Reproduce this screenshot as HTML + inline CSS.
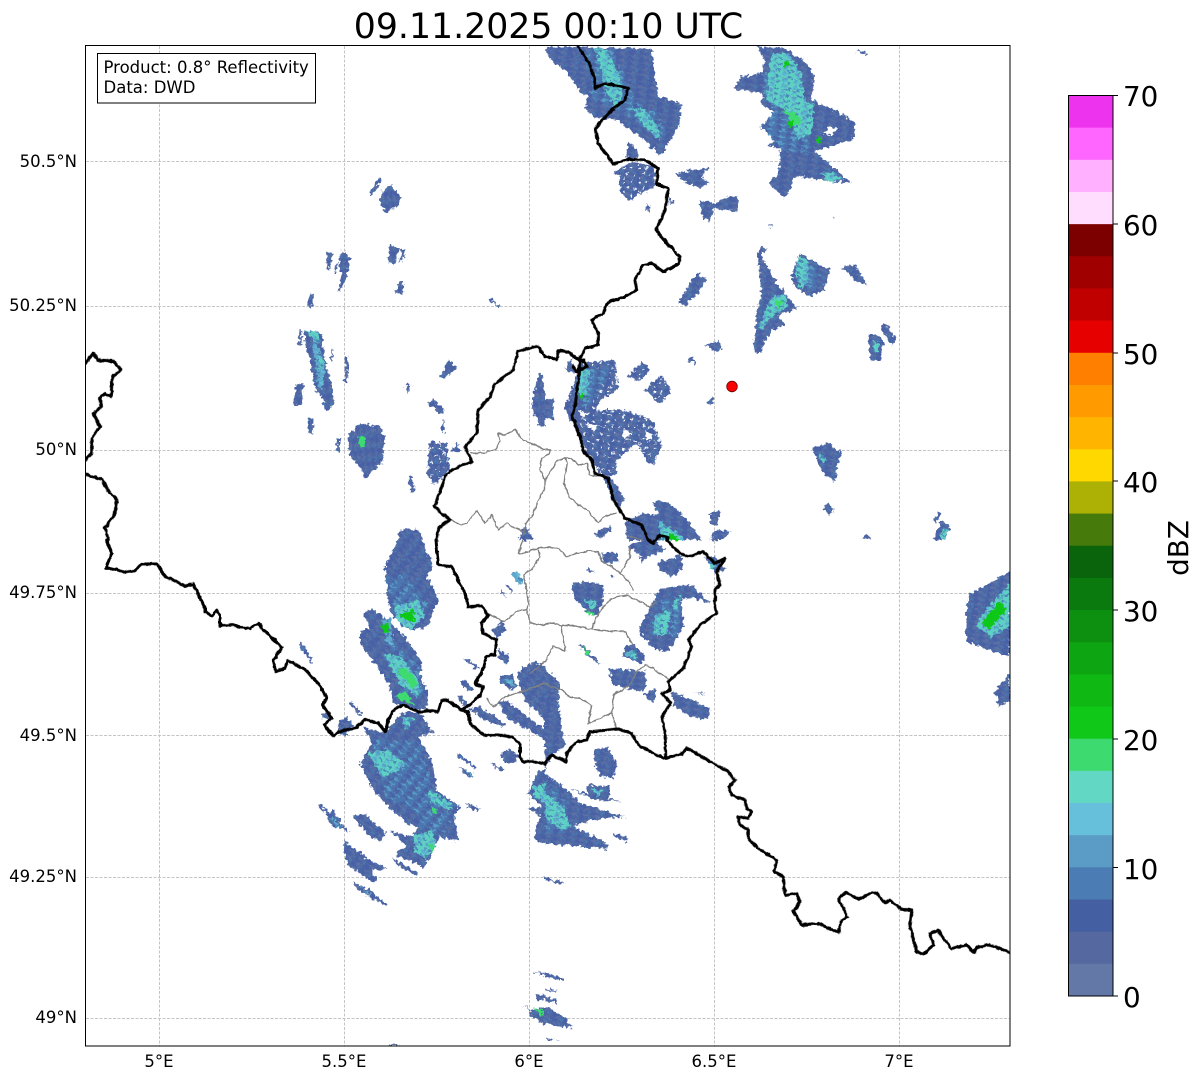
<!DOCTYPE html>
<html><head><meta charset="utf-8"><style>
html,body{margin:0;padding:0;background:#fff}
svg{display:block}
text{font-family:"DejaVu Sans",sans-serif;fill:#000}
.tl{font-size:16.5px}
.cb{font-size:27.78px}
.b{fill:url(#pb)}.m{fill:url(#pm)}.l{fill:url(#pl)}.t{fill:url(#pt)}.g{fill:#3ddb6f}.h{fill:#10c818}
.q1 .b{fill:url(#pbv)}.q1 .t{fill:url(#ptv)}
.q3 .b{fill:url(#pbd)}.q3 .m{fill:url(#pmd)}.q3 .t{fill:url(#ptd)}.q3 .l{fill:url(#pld)}
.sp{fill:url(#speck)}
</style></head><body>
<svg xmlns="http://www.w3.org/2000/svg" width="1202" height="1081" viewBox="0 0 1202 1081">
<defs>
<clipPath id="ax"><rect x="86" y="46" width="923.5" height="1000"/></clipPath>
<pattern id="pb" patternUnits="userSpaceOnUse" width="36" height="18" patternTransform="rotate(8)">
<rect width="36" height="18" fill="#5068a4"/><rect width="20" height="6" fill="#4761a6"/><rect x="12" y="6" width="16" height="6" fill="#5c72a6"/><rect x="26" y="12" width="10" height="6" fill="#4b78b0"/><rect x="2" y="12" width="12" height="6" fill="#4761a6"/>
</pattern>
<pattern id="pbv" href="#pb" patternTransform="rotate(82)"/>
<pattern id="pbd" href="#pb" patternTransform="rotate(38)"/>
<pattern id="pm" patternUnits="userSpaceOnUse" width="36" height="18" patternTransform="rotate(8)">
<rect width="36" height="18" fill="#4b76b0"/><rect width="18" height="6" fill="#5068a4"/><rect x="14" y="6" width="18" height="6" fill="#5a9cc5"/><rect x="4" y="12" width="14" height="6" fill="#4761a6"/>
</pattern>
<pattern id="pmd" href="#pm" patternTransform="rotate(38)"/>
<pattern id="pl" patternUnits="userSpaceOnUse" width="30" height="18" patternTransform="rotate(8)">
<rect width="30" height="18" fill="#5fa9cc"/><rect width="14" height="6" fill="#66c0dc"/><rect x="12" y="6" width="14" height="6" fill="#4b7ab2"/>
</pattern>
<pattern id="pld" href="#pl" patternTransform="rotate(38)"/>
<pattern id="pt" patternUnits="userSpaceOnUse" width="36" height="18" patternTransform="rotate(8)">
<rect width="36" height="18" fill="#5fd0c4"/><rect width="16" height="6" fill="#5ab4d2"/><rect x="16" y="6" width="14" height="6" fill="#4b86ba"/><rect x="2" y="12" width="12" height="6" fill="#5a9cc5"/>
</pattern>
<pattern id="ptv" href="#pt" patternTransform="rotate(82)"/>
<pattern id="ptd" href="#pt" patternTransform="rotate(38)"/>
<pattern id="speck" patternUnits="userSpaceOnUse" width="46" height="42">
<rect x="4" y="6" width="6" height="5" fill="#fff"/><rect x="26" y="2" width="5" height="7" fill="#fff"/><rect x="16" y="20" width="7" height="5" fill="#fff"/><rect x="36" y="26" width="6" height="4" fill="#fff"/><rect x="6" y="32" width="4" height="6" fill="#fff"/>
</pattern>
<filter id="rough" filterUnits="userSpaceOnUse" x="0" y="0" width="1202" height="1081">
<feTurbulence type="fractalNoise" baseFrequency="0.28" numOctaves="2" seed="4"/>
<feDisplacementMap in="SourceGraphic" scale="7" xChannelSelector="R" yChannelSelector="G"/>
</filter>
<filter id="jag" filterUnits="userSpaceOnUse" x="0" y="0" width="1202" height="1081">
<feTurbulence type="fractalNoise" baseFrequency="0.2" numOctaves="2" seed="9"/>
<feDisplacementMap in="SourceGraphic" scale="3" xChannelSelector="R" yChannelSelector="G"/>
</filter>
</defs>
<rect width="1202" height="1081" fill="#fff"/>
<g stroke="#c4c4c4" stroke-width="1" stroke-dasharray="3 1.5" fill="none">
<path d="M159.5 46V1046M344.5 46V1046M529.5 46V1046M714.5 46V1046M899.5 46V1046"/>
<path d="M86 161.5H1010M86 306.5H1010M86 450.5H1010M86 593.5H1010M86 735.5H1010M86 877.5H1010M86 1018.5H1010"/>
</g>
<g clip-path="url(#ax)"><g filter="url(#rough)">
<g class="q1" transform="translate(85,40) scale(.33333)">
<path class="b" d="M850 468L880 415L890 420L858 470ZM883 480L895 450L920 435L950 475L935 500L905 518L895 510ZM725 635L745 640L735 690L725 680ZM745 700L755 665L758 668L749 702ZM762 660L775 630L795 655L785 710L765 755L760 750L770 710ZM908 670L915 618L945 625L930 672ZM943 665L950 630L962 630L950 665ZM930 760L940 725L955 725L953 760ZM670 803L675 760L687 760L680 803ZM640 915L642 868L650 870L648 915ZM660 870L710 878L720 960L745 1050L745 1090L735 1112L720 1112L710 1070L690 1050L675 960L660 915ZM628 1095L632 1035L655 1030L650 1095ZM670 1180L670 1135L685 1135L685 1182ZM735 965L740 925L745 930L742 965ZM778 1028L780 950L790 950L788 1028ZM755 1235L755 1195L765 1195L765 1235ZM785 1190L825 1150L885 1160L900 1190L892 1270L850 1300L842 1320L830 1290L795 1245ZM1025 1305L1035 1205L1085 1210L1095 1290L1050 1335ZM1100 1235L1115 1205L1128 1235ZM970 1310L980 1310L990 1355L978 1358ZM950 1500L955 1465L1005 1470L1012 1500ZM1025 1085L1045 1080L1075 1105L1078 1120L1060 1122L1040 1100ZM1068 1175L1075 1135L1082 1175ZM1065 1010L1090 960L1118 985L1078 1015ZM960 1040L975 1030L972 1060L965 1050ZM1340 1090L1360 1000L1370 1000L1380 1060L1380 1160L1360 1155ZM1210 778L1220 770L1235 795L1250 795L1240 803ZM1300 1500L1320 1455L1345 1500Z"/>
<path class="sp" d="M1025 1305L1035 1205L1085 1210L1095 1290L1050 1335Z"/>
<path class="l" d="M680 900L710 940L720 990L712 1050L700 1040L685 930Z"/>
<path class="t" d="M660 870L698 875L705 915L690 905ZM700 945L718 960L715 990L705 985Z"/>
<path class="g" d="M820 1190L840 1195L838 1225L825 1220Z"/>
</g>
<g class="q2" transform="translate(545,40) scale(.33333)">
<path class="b" d="M0 25L20 20L320 25L340 170L410 190L405 245L385 290L360 320L365 335L340 345L300 300L215 240L155 235L120 205L130 165L110 160L60 90L15 60ZM240 350L250 305L275 330L280 355ZM210 395L260 365L330 380L330 440L280 465L250 485L225 455L225 420ZM298 510L310 490L318 515ZM370 470L390 490L375 495ZM390 405L435 390L490 385L470 410L495 430L465 445L430 430ZM465 480L510 490L545 470L580 470L575 515L545 510L505 505L495 545L470 530ZM635 20L720 25L785 70L810 110L800 180L880 215L930 250L930 295L870 315L810 335L920 430L830 420L750 410L720 475L670 430L700 400L705 325L665 315L720 290L645 265L690 215L650 195L655 160L565 145L590 110L650 100L660 60ZM935 30L965 40L960 45L935 35ZM400 790L440 720L455 700L485 715L460 760L420 795ZM637 640L650 620L665 625L650 650L675 695L700 735L755 805L730 815L700 825L720 855L680 870L640 945L625 925L635 815L650 760L640 680ZM740 705L765 640L855 690L835 750L795 770L745 735ZM892 680L930 675L968 735L935 725ZM1005 860L1025 850L1053 900L1040 918ZM970 885L990 880L1015 905L1005 965L975 960ZM480 915L515 905L535 925L510 935ZM425 960L445 950L452 970ZM100 970L210 960L220 1050L165 1080L155 1110L240 1110L320 1140L350 1210L325 1275L305 1265L275 1210L215 1260L215 1300L195 1310L240 1375L225 1400L200 1370L175 1310L135 1260L105 1190L75 1140L60 1100L90 1020ZM60 990L80 950L90 1000ZM0 1080L25 1075L25 1140L0 1135ZM245 1010L290 965L315 990L285 1025ZM298 1050L350 1005L380 1050L345 1090ZM322 1385L365 1385L410 1420L470 1500L250 1500L240 1450L285 1420L340 1425ZM145 1480L195 1455L200 1475L165 1495ZM495 1420L525 1415L520 1460L495 1450ZM495 1500L510 1470L560 1475L530 1500ZM800 1225L850 1208L890 1240L875 1280L870 1325L835 1300ZM835 1405L850 1385L865 1410L850 1425ZM1160 1445L1180 1415L1190 1420L1170 1450ZM1165 1500L1190 1440L1215 1460L1200 1500ZM950 1495L965 1480L980 1500ZM485 1090L500 1070L510 1085L495 1095ZM670 552L685 555L680 565ZM860 528L870 532L865 538Z"/>
<path class="sp" d="M100 970L210 960L220 1050L165 1080L155 1110L240 1110L320 1140L350 1210L325 1275L305 1265L275 1210L215 1260L215 1300L195 1310L175 1310L135 1260L105 1190ZM245 1010L290 965L315 990L285 1025ZM298 1050L350 1005L380 1050L345 1090ZM210 395L260 365L330 380L330 440L280 465L250 485L225 455Z"/>
<path fill="#fff" d="M850 260L875 265L860 290L835 280ZM100 1110L130 1120L115 1135ZM120 1150L170 1160L140 1170ZM150 1020L175 1030L150 1050ZM230 1170L260 1175L240 1200ZM300 1170L325 1185L305 1205Z"/>
<path class="m" d="M120 30L200 25L240 120L290 200L345 220L360 290L320 280L240 220L185 200L140 170ZM660 100L770 100L790 300L800 340L710 330L650 260L690 210L655 160ZM770 660L830 700L810 750L770 750ZM100 1000L190 980L160 1060L110 1120ZM650 800L720 780L690 850Z"/>
<path class="t" d="M150 20L185 30L225 110L235 170L210 200L180 155L160 60ZM255 200L300 210L340 260L345 300L300 260ZM680 40L730 40L770 100L780 180L805 190L800 280L760 300L720 210L665 180L670 110ZM825 400L860 395L900 420L850 425ZM760 650L790 660L790 720L770 750L750 700ZM680 770L720 760L730 800L690 820L650 870L640 860ZM340 1440L400 1480L420 1500L350 1500ZM980 900L1005 910L995 940L985 930ZM815 1235L845 1260L835 1270ZM1195 1465L1210 1470L1200 1500L1185 1495ZM110 980L135 990L125 1060L100 1070Z"/>
<path class="g" d="M710 210L750 220L770 240L760 260ZM690 780L715 785L700 810Z"/>
<path class="h" d="M715 65L735 65L735 80L718 80ZM725 245L745 240L745 262L730 262ZM815 295L830 295L830 308L815 308ZM100 1060L118 1060L118 1078L102 1078ZM370 1480L395 1490L400 1500L375 1500Z"/>
</g>
<g class="q3" transform="translate(85,540) scale(.33333)">
<path class="b" d="M930 20L945 -30L1000 -30L1045 80L1025 110L1060 180L1045 210L1030 260L970 270L945 235L925 235L910 190L900 80ZM640 310L650 305L685 365L678 370ZM835 220L860 205L895 230L920 250L960 290L1015 375L1005 400L1030 460L1025 510L985 505L925 490L915 440L880 385L825 310L825 275L855 265ZM705 525L730 515L740 540L720 540ZM760 545L780 530L805 555L780 590L760 570ZM790 490L800 485L830 518L820 525ZM835 560L900 580L945 520L1000 515L1045 578L1000 590L1045 670L1055 750L1125 800L1105 830L1125 905L1060 890L1045 935L1015 985L975 960L935 950L945 930L965 920L915 870L940 880L985 890L1000 860L965 850L900 790L865 750L825 670L860 610ZM700 800L710 795L795 875L790 878ZM720 825L745 810L775 860L750 865ZM800 825L840 825L905 880L885 905L855 890ZM775 900L860 965L905 985L895 990L860 985L875 1025L860 1025L790 975L780 950ZM800 1025L850 1050L905 1092L900 1098L820 1050ZM925 955L1000 1000L995 1008L935 975ZM1140 790L1185 805L1180 815L1140 795ZM1118 640L1175 680L1170 685L1118 650ZM1120 680L1165 705L1150 712ZM1215 665L1258 690L1245 695ZM1250 640L1275 625L1300 650L1285 672L1255 665ZM1135 355L1145 352L1185 385L1170 385ZM1125 425L1140 420L1165 450L1150 455ZM1115 470L1125 465L1150 495L1140 500ZM1150 505L1185 500L1260 550L1255 560L1200 540ZM1245 405L1280 405L1300 440L1280 450L1245 425ZM1310 385L1350 365L1380 380L1380 540L1320 480L1295 410ZM1240 485L1260 480L1380 570L1380 600L1260 530ZM1330 760L1360 690L1380 690L1380 915L1345 900L1365 830L1330 805L1370 800ZM1245 155L1250 150L1265 175ZM1260 135L1268 132L1285 155L1278 158ZM1220 270L1255 245L1262 270L1235 295ZM1240 325L1270 345L1265 375L1240 350ZM1345 1295L1380 1300L1380 1305L1345 1297ZM1355 1362L1380 1365L1380 1380L1355 1380ZM1310 1395L1345 1410L1380 1400L1380 1455L1340 1430L1335 1410ZM910 1510L950 1518L915 1518Z"/>
<path class="m" d="M920 300L1000 380L1015 470L950 470ZM900 120L960 100L1030 200L950 260ZM860 600L1000 600L1050 760L1000 820L900 770ZM1000 760L1110 830L1060 900L1000 860Z"/>
<path class="l" d="M1280 100L1300 95L1315 125L1300 135ZM890 240L915 235L925 320L905 310ZM730 825L770 860L760 865ZM825 1040L855 1060L850 1065ZM1145 695L1160 700L1155 710ZM1245 420L1280 415L1290 440Z"/>
<path class="t" d="M905 340L950 350L1000 420L1000 470L950 440L900 350ZM930 200L1000 180L1020 230L975 270L930 235ZM850 640L900 630L965 670L930 700L890 710ZM1030 750L1100 790L1100 810L1040 790ZM985 890L1040 870L1055 920L1025 955L990 940ZM1340 740L1380 730L1380 790L1350 770ZM950 530L990 535L960 570Z"/>
<path class="g" d="M935 395L965 385L1000 430L985 445ZM930 470L960 455L990 500ZM1030 910L1050 920L1040 940ZM1040 800L1060 815L1045 825ZM1345 1405L1375 1412L1370 1428Z"/>
<path class="h" d="M945 225L985 205L990 245L960 240ZM885 255L910 250L915 275L895 280Z"/>
</g>
<g class="q4" transform="translate(545,540) scale(.33333)">
<path class="b" d="M0 385L45 430L40 490L55 590L60 620L25 640L0 690ZM0 700L60 745L110 790L215 825L240 830L130 840L85 860L195 915L185 928L0 910ZM75 745L125 760L130 735L195 740L190 775L230 785L150 780ZM205 880L250 895L245 905L205 890ZM150 625L190 625L215 675L205 715L165 710L150 670ZM0 1298L55 1315L50 1322L0 1310ZM0 1345L45 1355L0 1352ZM0 1370L38 1380L35 1390L0 1385ZM0 1400L58 1430L85 1465L30 1460L0 1445ZM0 1010L52 1028L50 1033L0 1020ZM5 1495L40 1500L5 1500ZM80 130L90 130L130 125L175 135L175 180L155 225L130 220L85 170ZM170 40L215 35L220 65L180 70ZM280 50L300 55L290 68ZM195 108L205 108L200 115ZM125 80L155 100L130 95ZM100 312L120 320L170 375L125 345ZM240 320L265 312L300 345L290 372L235 350ZM190 385L300 395L305 440L290 455L205 435ZM300 460L330 448L330 490L310 485ZM380 455L440 480L495 505L490 540L440 530L385 495ZM450 455L480 460L475 465ZM285 260L345 145L440 135L495 190L440 170L410 180L415 260L370 335L325 325L285 280ZM340 65L410 45L415 85L380 110L340 90ZM250 20L290 0L330 0L360 30L300 55ZM480 55L510 50L545 90L510 95ZM1395 95L1270 165L1260 260L1265 305L1305 320L1395 350ZM1350 455L1395 395L1395 480L1360 500Z"/>
<path class="m" d="M340 180L410 170L400 280L320 290ZM0 720L60 780L60 880L0 880Z"/>
<path class="t" d="M0 760L55 800L80 860L50 870L0 830ZM330 225L380 210L365 285L325 285ZM395 170L410 165L390 215L380 200ZM245 330L275 335L270 360L240 345ZM115 175L160 190L140 210ZM1330 200L1395 130L1395 260L1340 290L1290 260ZM490 70L515 75L500 90ZM130 745L175 750L160 770Z"/>
<path class="g" d="M110 320L135 340L125 345ZM120 210L150 220L135 228Z"/>
<path class="h" d="M1310 250L1365 180L1385 210L1330 270Z"/>
</g>
</g>
<g filter="url(#jag)" fill="none" stroke-linejoin="round" stroke-linecap="round">
<g transform="translate(430,420) scale(.33333)" stroke="#808080" stroke-width="4.2">
<path d="M125 100L165 98L195 90L210 60L205 40L225 45L255 28L280 62L310 72L340 88L362 90L360 100L335 115L330 150L345 180L380 125L405 112L425 115L445 135L472 130L478 165L500 168"/>
<path d="M345 180L345 205L325 240L310 280L288 310L280 345"/>
<path d="M405 112L410 130L402 190L418 232L440 250L470 270L505 308L520 292L560 278"/>
<path d="M62 300L90 313L110 310L140 272L165 310L185 285L205 330L230 310L270 330L285 340"/>
<path d="M280 360L265 400L270 402L300 392L325 385L355 380L385 385L410 410L440 400L480 392L505 395L515 425L545 440L570 460L600 490L608 510"/>
<path d="M325 390L330 410L305 450L280 465L290 510L295 550L290 570L262 572L225 605L180 585"/>
<path d="M600 350L640 360M600 380L598 415L570 460"/>
<path d="M290 570L300 610L340 615L365 608L395 618L420 615L485 628L530 632L585 635L610 675"/>
<path d="M395 620L400 660L405 692L370 678L345 725L300 760"/>
<path d="M485 628L500 590L530 550L545 535L590 525L660 560L680 545"/>
<path d="M620 755L645 735L670 745L690 762L715 775"/>
<path d="M620 755L600 795L550 825L545 880L475 910L485 855L450 835L420 832L395 810L340 790L290 810L225 830L190 860L170 835"/>
<path d="M545 880L558 922"/>
</g>
<g stroke="#000" stroke-width="9">
<g transform="translate(85,40) scale(.33333)">
<path d="M0 970L25 940L38 960L85 963L108 990L82 1010L78 1070L60 1060L45 1075L48 1100L25 1120L45 1160L20 1195L20 1240L0 1262"/>
<path d="M0 1303L50 1318L65 1345L95 1380L90 1420L60 1465L70 1500"/>
<path d="M1055 1500L1062 1462L1095 1440L1048 1400L1085 1300L1130 1275L1160 1265L1140 1220L1175 1180L1180 1110L1215 1070L1230 1030L1285 990L1298 935L1358 918L1380 950"/>
</g>
<g transform="translate(545,40) scale(.33333)">
<path d="M0 950L35 958L40 932L70 935L100 960L118 960L125 980L95 995L85 980M105 960L100 1020L90 1100L80 1125L105 1190L115 1235L140 1260L150 1300L190 1315L205 1380L240 1435L290 1455L310 1500"/>
<path d="M100 20L135 75L150 120L150 145L180 130L250 145L240 180L200 210L150 265L160 310L205 372L250 358L300 360L340 385L333 430L370 445L360 510L333 570L370 615L405 650L400 672L355 695L320 670L295 675L270 720L275 750L240 770L190 785L175 820L140 840L160 880L160 915L120 925L105 955L115 965"/>
<path d="M310 1500L325 1510L345 1485L370 1495"/>
</g>
<g transform="translate(85,540) scale(.33333)">
<path d="M65 0L80 40L62 85L80 85L120 97L150 92L170 72L215 72L240 108L300 138L325 132L360 205L360 215L380 228L395 212L405 225L405 257L450 255L465 262L495 265L520 250L535 270L592 322L565 360L572 395L600 385L607 362L655 385L700 430L725 472L713 495L740 535L718 553L745 590L760 575L815 562L840 538L880 550L900 575L910 540L930 505L955 495L1000 515L1040 512L1060 515L1070 480L1085 480L1130 510L1160 490L1190 460L1195 440L1168 430L1190 400L1205 348L1230 345L1235 300L1195 280L1190 250L1210 225L1190 197L1150 200L1140 160L1100 80L1060 75L1053 0"/>
<path d="M1130 510L1150 515L1155 550L1195 585L1240 585L1280 590L1305 610L1305 650L1315 665L1350 665L1380 672"/>
</g>
<g transform="translate(545,540) scale(.33333)">
<path d="M310 0L325 10"/>
<path d="M365 0L405 40L430 50L475 35L510 70L540 55L515 95L525 135L510 150L510 200L515 220L465 255L430 300L440 320L415 385L370 425L375 450L350 460L378 490L350 530L360 575L362 650"/>
<path d="M0 672L20 645L65 665L65 640L95 605L125 600L135 575L220 567L260 580L280 615L325 640L362 655L410 642L425 625L470 650L505 670L550 695L570 722L550 740L560 765L600 780L605 805L620 815L610 835L580 830L585 855L610 870L610 895L640 925L695 960L688 995L715 1010L720 1065L755 1060L765 1085L745 1115L770 1155L820 1150L880 1178L890 1140L908 1130L880 1075L905 1057L940 1078L980 1057L995 1060L1020 1088L1035 1080L1070 1108L1100 1110L1095 1160L1115 1235L1135 1243L1165 1215L1155 1180L1180 1170L1190 1190L1220 1225L1265 1215L1285 1238L1295 1222L1330 1215L1365 1225L1395 1238"/>
</g>
</g>
</g>
<circle cx="732" cy="386.5" r="5.3" fill="#f00" stroke="#600" stroke-width=".8"/>
</g>
<rect x="85.5" y="45.5" width="924.5" height="1000.5" fill="none" stroke="#000" stroke-width="1"/>
<rect x="97.5" y="53.5" width="218" height="49.5" fill="#fff" stroke="#000" stroke-width="1"/>
<text x="103.5" y="73" class="tl">Product: 0.8° Reflectivity</text>
<text x="103.5" y="93" class="tl">Data: DWD</text>
<text x="548.5" y="38" text-anchor="middle" style="font-size:34.7px">09.11.2025 00:10 UTC</text>
<g class="tl" text-anchor="end">
<text x="77" y="167">50.5°N</text><text x="77" y="311">50.25°N</text><text x="77" y="455">50°N</text><text x="77" y="598">49.75°N</text><text x="77" y="741">49.5°N</text><text x="77" y="882">49.25°N</text><text x="77" y="1023">49°N</text>
</g>
<g class="tl" text-anchor="middle">
<text x="159" y="1067">5°E</text><text x="344" y="1067">5.5°E</text><text x="529" y="1067">6°E</text><text x="714" y="1067">6.5°E</text><text x="899" y="1067">7°E</text>
</g>
<g>
<rect x="1068.5" y="95.5" width="44.5" height="32.6" fill="#ee33ee"/>
<rect x="1068.5" y="127.66" width="44.5" height="32.6" fill="#ff66ff"/>
<rect x="1068.5" y="159.82" width="44.5" height="32.6" fill="#ffb0ff"/>
<rect x="1068.5" y="191.98" width="44.5" height="32.6" fill="#ffddff"/>
<rect x="1068.5" y="224.14" width="44.5" height="32.6" fill="#7d0000"/>
<rect x="1068.5" y="256.3" width="44.5" height="32.6" fill="#a00000"/>
<rect x="1068.5" y="288.46" width="44.5" height="32.6" fill="#c00000"/>
<rect x="1068.5" y="320.62" width="44.5" height="32.6" fill="#e60000"/>
<rect x="1068.5" y="352.78" width="44.5" height="32.6" fill="#ff7f00"/>
<rect x="1068.5" y="384.94" width="44.5" height="32.6" fill="#ff9a00"/>
<rect x="1068.5" y="417.1" width="44.5" height="32.6" fill="#ffb400"/>
<rect x="1068.5" y="449.26" width="44.5" height="32.6" fill="#ffd800"/>
<rect x="1068.5" y="481.42" width="44.5" height="32.6" fill="#adb005"/>
<rect x="1068.5" y="513.58" width="44.5" height="32.6" fill="#467a0a"/>
<rect x="1068.5" y="545.74" width="44.5" height="32.6" fill="#0a640c"/>
<rect x="1068.5" y="577.9" width="44.5" height="32.6" fill="#0b7a0e"/>
<rect x="1068.5" y="610.06" width="44.5" height="32.6" fill="#0d8f10"/>
<rect x="1068.5" y="642.22" width="44.5" height="32.6" fill="#0ea512"/>
<rect x="1068.5" y="674.38" width="44.5" height="32.6" fill="#10b814"/>
<rect x="1068.5" y="706.54" width="44.5" height="32.6" fill="#10c818"/>
<rect x="1068.5" y="738.7" width="44.5" height="32.6" fill="#3ddb6f"/>
<rect x="1068.5" y="770.86" width="44.5" height="32.6" fill="#62d8c4"/>
<rect x="1068.5" y="803.02" width="44.5" height="32.6" fill="#66c0dc"/>
<rect x="1068.5" y="835.18" width="44.5" height="32.6" fill="#5a9cc5"/>
<rect x="1068.5" y="867.34" width="44.5" height="32.6" fill="#4b7cb3"/>
<rect x="1068.5" y="899.5" width="44.5" height="32.6" fill="#445fa2"/>
<rect x="1068.5" y="931.66" width="44.5" height="32.6" fill="#55689f"/>
<rect x="1068.5" y="963.82" width="44.5" height="32.2" fill="#6478a8"/>
<rect x="1068.5" y="95.5" width="44.5" height="900.5" fill="none" stroke="#000" stroke-width="1"/>
<path d="M1113 95.5h5M1113 224h5M1113 353h5M1113 481h5M1113 610h5M1113 739h5M1113 867.5h5M1113 996h5" stroke="#000" stroke-width="1"/>
</g>
<g class="cb">
<text x="1123" y="106">70</text><text x="1123" y="235">60</text><text x="1123" y="364">50</text><text x="1123" y="492">40</text><text x="1123" y="621">30</text><text x="1123" y="750">20</text><text x="1123" y="879">10</text><text x="1123" y="1007">0</text>
</g>
<text transform="translate(1188,548) rotate(-90)" text-anchor="middle" class="cb">dBZ</text>
</svg>
</body></html>
